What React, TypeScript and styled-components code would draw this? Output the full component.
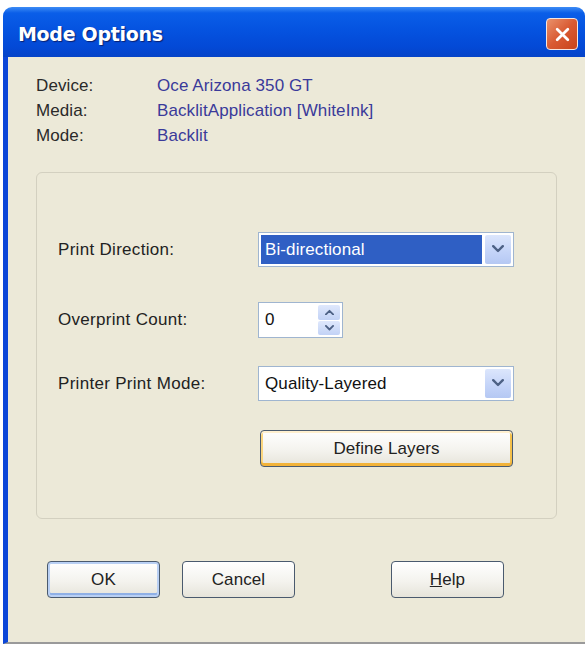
import { FC, Fragment } from "react";
import styled, { createGlobalStyle } from "styled-components";

const GlobalStyle = createGlobalStyle`
  html, body {
    margin: 0;
    padding: 0;
    background: #ffffff;
  }
  body {
    font-family: "Liberation Sans", Arial, sans-serif;
  }
`;

const Window = styled.div`
  margin: 7px 0 0 3px;
  width: 582px;
  height: 637px;
  display: flex;
  flex-direction: column;
`;

const TitleBar = styled.div`
  height: 50px;
  flex-shrink: 0;
  box-sizing: border-box;
  display: flex;
  align-items: center;
  justify-content: space-between;
  padding: 4px 7px 0 15px;
  border-radius: 9px 9px 0 0;
  background: linear-gradient(
    to bottom,
    #3d8cf5 0%,
    #0a5ee8 12%,
    #0553e0 45%,
    #0349d6 80%,
    #0543c8 100%
  );
`;

const Title = styled.div`
  color: #ffffff;
  font-family: "DejaVu Sans", sans-serif;
  font-weight: bold;
  font-size: 19px;
  letter-spacing: -0.3px;
  text-shadow: 1px 1px 1px #0a1f6e;
`;

const CloseButton = styled.div`
  width: 32px;
  height: 32px;
  border: 1.5px solid #f4e6e0;
  border-radius: 4px;
  background: linear-gradient(135deg, #e9926c 0%, #d95a32 50%, #c8441c 100%);
  display: flex;
  align-items: center;
  justify-content: center;
  box-sizing: border-box;
`;

const Body = styled.div`
  flex: 1;
  display: flex;
  flex-direction: column;
  background: #ece9d8;
  border-left: 5px solid #0b46d8;
  border-bottom: 2px solid #9a9a9a;
  padding: 16px 0 0 28px;
`;

const InfoGrid = styled.div`
  display: grid;
  grid-template-columns: 121px auto;
  grid-auto-rows: 25px;
  align-items: center;
  font-size: 17px;
  letter-spacing: 0.1px;
`;

const InfoLabel = styled.div`
  color: #2a2a2a;
`;

const InfoValue = styled.div`
  color: #3a3a9a;
`;

const GroupBox = styled.div`
  margin-top: 24px;
  width: 521px;
  height: 347px;
  box-sizing: border-box;
  border: 1px solid #d3d0c0;
  border-radius: 6px;
  padding: 59px 0 0 21px;
  display: flex;
  flex-direction: column;
`;

const FieldRow = styled.div<{ $top: number }>`
  display: flex;
  align-items: center;
  margin-top: ${(p) => p.$top}px;
`;

const FieldLabel = styled.div`
  width: 200px;
  font-size: 17px;
  letter-spacing: 0.3px;
  color: #222222;
`;

const Combo = styled.div`
  width: 256px;
  height: 35px;
  box-sizing: border-box;
  border: 1px solid #9fb5d0;
  background: #ffffff;
  display: flex;
  align-items: stretch;
  padding: 2px;
`;

const ComboText = styled.div<{ $selected?: boolean }>`
  flex: 1;
  display: flex;
  align-items: center;
  padding-left: 4px;
  font-size: 17px;
  letter-spacing: 0.1px;
  color: ${(p) => (p.$selected ? "#ffffff" : "#111111")};
  background: ${(p) => (p.$selected ? "#2f5fc4" : "transparent")};
  margin-right: 3px;
`;

const ArrowButton = styled.div`
  width: 26px;
  border-radius: 2px;
  background: linear-gradient(to bottom, #dce6fc 0%, #c3d3f8 60%, #b5c8f3 100%);
  display: flex;
  align-items: center;
  justify-content: center;
`;

const Spinner = styled.div`
  width: 85px;
  height: 36px;
  box-sizing: border-box;
  border: 1px solid #9fb5d0;
  background: #ffffff;
  display: flex;
  padding: 2px;
`;

const SpinValue = styled.div`
  flex: 1;
  display: flex;
  align-items: center;
  padding-left: 4px;
  font-size: 17px;
  color: #111111;
`;

const SpinButtons = styled.div`
  width: 22px;
  display: flex;
  flex-direction: column;
  gap: 1px;
`;

const SpinHalf = styled.div`
  flex: 1;
  border-radius: 2px;
  background: linear-gradient(to bottom, #dfe8fc 0%, #c2d2f6 100%);
  display: flex;
  align-items: center;
  justify-content: center;
`;

const Button = styled.button<{ $width: number; $default?: boolean; $hot?: boolean }>`
  width: ${(p) => p.$width}px;
  height: 37px;
  box-sizing: border-box;
  border: 1.5px solid #4a5a6e;
  border-radius: 4px;
  font-family: "Liberation Sans", Arial, sans-serif;
  font-size: 17px;
  letter-spacing: 0.1px;
  color: #222222;
  background: linear-gradient(to bottom, #ffffff 0%, #f4f3ee 55%, #e6e4da 100%);
  box-shadow: ${(p) =>
    p.$hot
      ? "inset 0 -3px 0 #f2b33a, inset 0 2px 0 #fff0cf, inset 2px 0 0 #fbd67f, inset -2px 0 0 #f4c04a"
      : p.$default
      ? "inset 0 0 0 2px #b9d0f4, inset 0 -2px 0 2px #8fb0e6"
      : "none"};
  padding: 0;
  cursor: default;
  u {
    text-decoration: underline;
  }
`;

const DefineRow = styled.div`
  margin-top: 29px;
  margin-left: 202px;
`;

const ButtonBar = styled.div`
  display: flex;
  align-items: center;
  margin-top: 42px;
  padding-left: 11px;
`;

const Spacer = styled.div<{ $w: number }>`
  width: ${(p) => p.$w}px;
`;

const Chevron: FC<{ up?: boolean; size?: number }> = ({ up, size = 12 }) => (
  <svg width={size} height={size * 0.7} viewBox="0 0 10 7">
    <path
      d={up ? "M1 6 L5 2 L9 6" : "M1 1 L5 5 L9 1"}
      stroke="#4d6185"
      strokeWidth="2"
      fill="none"
      strokeLinecap="round"
      strokeLinejoin="round"
    />
  </svg>
);

const info = [
  ["Device:", "Oce Arizona 350 GT"],
  ["Media:", "BacklitApplication [WhiteInk]"],
  ["Mode:", "Backlit"],
];

export default function App() {
  return (
    <>
      <GlobalStyle />
      <Window>
        <TitleBar>
          <Title>Mode Options</Title>
          <CloseButton>
            <svg width="17" height="17" viewBox="0 0 16 16">
              <path
                d="M3 3 L13 13 M13 3 L3 13"
                stroke="#ffffff"
                strokeWidth="2.6"
                strokeLinecap="round"
              />
            </svg>
          </CloseButton>
        </TitleBar>
        <Body>
          <InfoGrid>
            {info.map(([label, value]) => (
              <Fragment key={label}>
                <InfoLabel>{label}</InfoLabel>
                <InfoValue>{value}</InfoValue>
              </Fragment>
            ))}
          </InfoGrid>
          <GroupBox>
            <FieldRow $top={0}>
              <FieldLabel>Print Direction:</FieldLabel>
              <Combo>
                <ComboText $selected>Bi-directional</ComboText>
                <ArrowButton>
                  <Chevron />
                </ArrowButton>
              </Combo>
            </FieldRow>
            <FieldRow $top={35}>
              <FieldLabel>Overprint Count:</FieldLabel>
              <Spinner>
                <SpinValue>0</SpinValue>
                <SpinButtons>
                  <SpinHalf>
                    <Chevron up size={9} />
                  </SpinHalf>
                  <SpinHalf>
                    <Chevron size={9} />
                  </SpinHalf>
                </SpinButtons>
              </Spinner>
            </FieldRow>
            <FieldRow $top={28}>
              <FieldLabel>Printer Print Mode:</FieldLabel>
              <Combo>
                <ComboText>Quality-Layered</ComboText>
                <ArrowButton>
                  <Chevron />
                </ArrowButton>
              </Combo>
            </FieldRow>
            <DefineRow>
              <Button $width={253} $hot>
                Define Layers
              </Button>
            </DefineRow>
          </GroupBox>
          <ButtonBar>
            <Button $width={113} $default>
              OK
            </Button>
            <Spacer $w={22} />
            <Button $width={113}>Cancel</Button>
            <Spacer $w={96} />
            <Button $width={113}>
              <u>H</u>elp
            </Button>
          </ButtonBar>
        </Body>
      </Window>
    </>
  );
}
